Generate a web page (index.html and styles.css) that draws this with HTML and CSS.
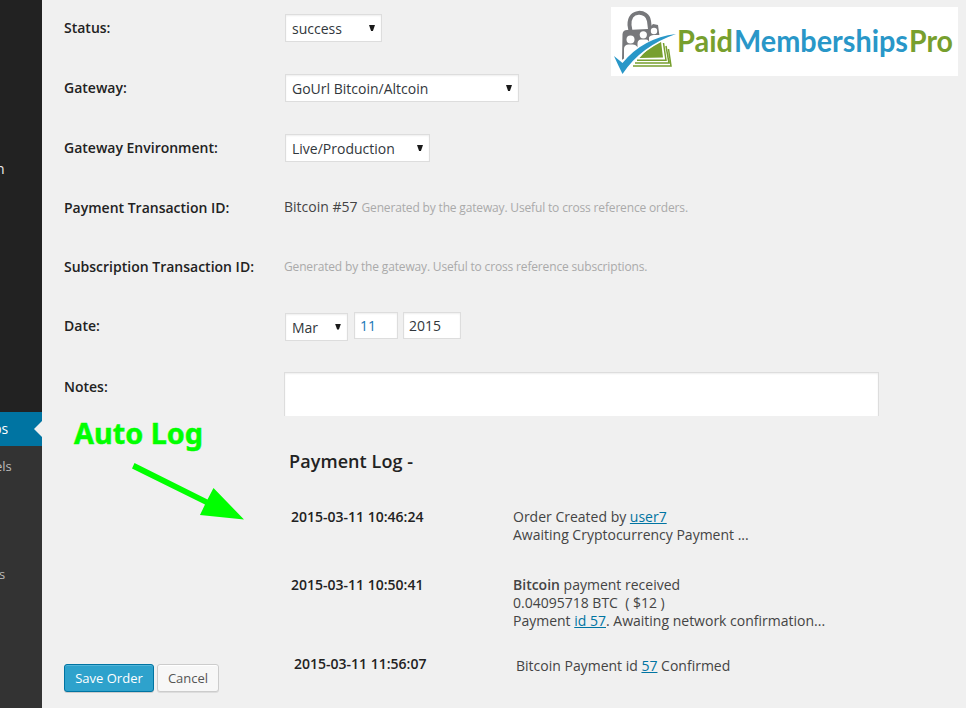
FILE: index.html
```html
<!DOCTYPE html>
<html lang="en">
<head>
<meta charset="utf-8">
<title>Order</title>
<link rel="stylesheet" href="styles.css">
</head>
<body>
<div class="app">
  <aside class="sidebar">
    <div class="menu-upper"><span>n</span></div>
    <div class="menu-current"><span>ps</span></div>
    <div class="submenu"><span>els</span><span>s</span></div>
  </aside>
  <main class="content">
    <form class="form">
      <div class="row"><label>Status:</label><div class="select status">success<i></i></div></div>
      <div class="row"><label>Gateway:</label><div class="select gateway">GoUrl Bitcoin/Altcoin<i></i></div></div>
      <div class="row"><label>Gateway Environment:</label><div class="select environment">Live/Production<i></i></div></div>
      <div class="row"><label>Payment Transaction ID:</label><div class="value"><span class="txn">Bitcoin #57</span><small>Generated by the gateway. Useful to cross reference orders.</small></div></div>
      <div class="row short"><label>Subscription Transaction ID:</label><div class="value"><small>Generated by the gateway. Useful to cross reference subscriptions.</small></div></div>
      <div class="row"><label>Date:</label><div class="date"><div class="select month">Mar<i></i></div><div class="input day">11</div><div class="input year">2015</div></div></div>
      <div class="row notes"><label>Notes:</label><div class="textarea"></div></div>
    </form>
    <section class="log">
      <h3>Payment Log -</h3>
      <div class="entry first"><time>2015-03-11 10:46:24</time><p>Order Created by <a>user7</a><br>Awaiting Cryptocurrency Payment ...</p></div>
      <div class="entry second"><time>2015-03-11 10:50:41</time><p><b>Bitcoin</b> payment received<br>0.04095718 BTC&nbsp; ( $12 )<br>Payment <a>id 57</a>. Awaiting network confirmation...</p></div>
      <div class="entry third"><time>2015-03-11 11:56:07</time><p>Bitcoin Payment id <a>57</a> Confirmed</p></div>
    </section>
    <div class="actions"><button class="primary">Save Order</button><button>Cancel</button></div>
  </main>
  <svg class="logo" width="347" height="69" viewBox="611 7 347 69">
    <rect x="611" y="7" width="347" height="69" fill="#fff"/>
    <path d="M630.5 31L629.5 25C629 9 647.500 10 649 21L650 29" fill="none" stroke="#77787b" stroke-width="4"/>
    <path d="M622 60L622.500 34Q623 30 627 30L648 29L653 24L658 25L659.500 36L640 46Z" fill="#77787b"/>
    <g fill="#fff"><circle cx="630.5" cy="39.500" r="4"/><circle cx="643.3" cy="34.800" r="3.600"/><circle cx="654" cy="31" r="3.2"/>
    <path d="M624 60V49Q624 45 628 44.500H633Q638 45 638 50L624 62ZM637.500 48V43Q638 39.500 641 39.500H646Q649 39.500 649 44L639 50ZM649 41V37.500Q650 35 654 35L661 35V40Z"/></g>
    <path d="M639.500 58Q649 46.500 661 41.500L663 57.500Z" fill="#779f2e"/>
    <path d="M637 60.200H666L663.500 43M635 63H669L666 46M633 66H671L668.500 49" fill="none" stroke="#779f2e" stroke-width="1.500"/>
    <path d="M614 56L623 61Q643 40 677 34Q642 47 622 74Z" fill="#fff" stroke="#fff" stroke-width="1.500"/>
    <path d="M614 56L622.500 63Q643 38 676 34Q641 46 622.500 74Q618 65 614 56Z" fill="#2997c8"/>
    <g class="wordmark"><text x="677" y="52" textLength="56" lengthAdjust="spacingAndGlyphs" fill="#779f2e">Paid</text><text x="734" y="52" textLength="174" lengthAdjust="spacingAndGlyphs" fill="#2997c8">Memberships</text><text x="909" y="52" textLength="44" lengthAdjust="spacingAndGlyphs" fill="#779f2e">Pro</text></g>
  </svg>
  <svg class="callout" width="180" height="115" viewBox="70 412 180 115">
    <text x="74" y="443.5" textLength="129" lengthAdjust="spacingAndGlyphs">Auto Log</text>
    <path d="M134.5 463L207.5 499.5L213.5 488L244 519.5L200 515L205 504.5L132 468.5Z"/>
  </svg>
</div>
</body>
</html>
```
FILE: styles.css
```css
* { box-sizing: border-box; }
body { margin: 0; font: 14px/18px "Open Sans", sans-serif; color: #444; background: #f0f0f0; }
.app { position: relative; display: flex; width: 966px; height: 708px; overflow: hidden; }
.sidebar { width: 42px; flex: none; background: #333; overflow: hidden; display: flex; flex-direction: column; }
.sidebar span { display: block; white-space: nowrap; }
.menu-upper { height: 412px; background: #222; color: #eee; padding-top: 160px; }
.menu-upper span { margin-left: -4px; }
.menu-current { position: relative; height: 34px; background: #0074a2; color: #fff; padding-top: 8px; }
.menu-current span { margin-left: -7px; }
.menu-current::after { content: ""; position: absolute; right: 0; top: 9px; border: 8px solid transparent; border-left: 0; border-right-color: #f0f0f0; }
.submenu { color: #bbb; font-size: 13px; padding-top: 11px; }
.submenu span { margin: 0 0 90px -5px; }
.submenu span + span { margin-left: -1px; }
.content { flex: 1; padding-left: 22px; }
.form { display: flex; flex-direction: column; gap: 4px; }
.row { display: grid; grid-template-columns: 220px 1fr; align-items: center; height: 56px; }
.row.short { height: 54px; }
label, time { font-weight: 600; color: #222; }
.select { position: relative; margin-left: 1px; height: 28px; border: 1px solid #ddd; background: #fff; box-shadow: inset 0 1px 2px rgba(0,0,0,.07); color: #32373c; padding: 5px 6px; }
.select i { position: absolute; right: 6px; top: 10px; width: 6px; height: 6px; background: #1a1a1a; clip-path: polygon(0 0, 100% 0, 65% 100%, 35% 100%); }
.status { width: 97px; }
.gateway { width: 234px; }
.environment { width: 145px; }
.value { white-space: nowrap; margin-top: -2px; }
small { font-size: 12px; color: #aaa; letter-spacing: -.16px; }
.txn { margin-right: 4px; color: #444; }
.date { display: flex; padding-top: 1px; }
.month { width: 63px; }
.input { height: 27px; margin-top: -1px; border: 1px solid #ddd; background: #fff; padding: 4px 5px; box-shadow: inset 0 1px 2px rgba(0,0,0,.07); color: #32373c; }
.day { width: 44px; margin-left: 6px; color: #1675b5; }
.year { width: 58px; margin-left: 5px; }
.notes { align-items: start; height: 58px; padding-top: 14px; }
.notes label { padding-top: 6px; }
.textarea { width: 595px; height: 44px; border: 1px solid #ddd; border-bottom: 0; background: #fff; box-shadow: inset 0 1px 2px rgba(0,0,0,.07); }
.log { padding: 32px 0 0 227px; height: 248px; }
h3 { margin: 0 0 34px -2px; font-size: 18px; line-height: 26px; font-weight: 600; color: #222; letter-spacing: .08px; }
.entry { display: grid; grid-template-columns: 222px 1fr; }
.entry p { margin: 0; white-space: nowrap; }
.first { height: 68px; }
.second { height: 79px; }
.third { margin-left: 3px; }
.third p { padding-top: 2px; }
b { font-weight: 600; }
a { color: #0074a2; text-decoration: underline; }
.actions { display: flex; gap: 3px; }
button { height: 28px; width: 62px; padding: 0 0 1px; font: 13px "Open Sans", sans-serif; border: 1px solid #ccc; border-radius: 3px; background: #f7f7f7; color: #555; box-shadow: inset 0 1px 0 #fff, 0 1px 0 rgba(0,0,0,.08); }
button.primary { width: 90px; background: #2ea2cc; border-color: #0074a2; color: #fff; box-shadow: inset 0 1px 0 rgba(120,200,230,.5), 0 1px 0 rgba(0,0,0,.15); }
.logo { position: absolute; left: 611px; top: 7px; }
.wordmark { font: 700 30px Lato, sans-serif; }
.callout { position: absolute; left: 70px; top: 412px; fill: #0f0; font: 700 28px "Noto Sans", sans-serif; }
.callout text { stroke: #0f0; stroke-width: .5px; }
```
